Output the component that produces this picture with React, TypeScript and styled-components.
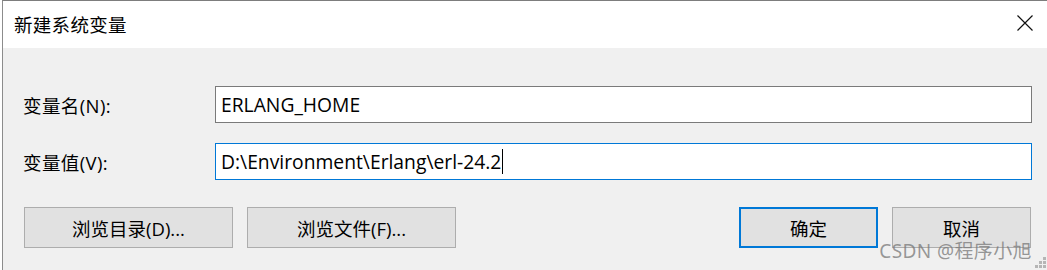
import React from "react";
import styled, { createGlobalStyle } from "styled-components";

const Global = createGlobalStyle`
  html, body { margin: 0; padding: 0; background: #ffffff; }
  body { width: 1047px; height: 270px; overflow: hidden; }
`;

const FONT = `"Segoe UI", "Open Sans", "Noto Sans CJK SC", sans-serif`;

const Window = styled.div`
  position: relative;
  margin-left: 2px;
  width: 1045px;
  height: 269px;
  border-top: 1px solid #7d7d7d;
  border-left: 1px solid #8c8c8c;
  background: #f0f0f0;
  font-family: ${FONT};
  color: #000;
  display: flex;
  flex-direction: column;
  overflow: hidden;
`;

const TitleBar = styled.div`
  height: 47px;
  background: #ffffff;
  display: flex;
  align-items: center;
  justify-content: space-between;
  padding: 0 15px 0 11px;
  flex-shrink: 0;
`;

const Title = styled.span`
  font-size: 18.5px;
  letter-spacing: 0.3px;
  margin-top: -2px;
`;

const CloseIcon = styled.svg`
  width: 16px;
  height: 16px;
  margin-top: -4px;
`;

const Body = styled.div`
  flex: 1;
  padding: 38px 16px 0 20px;
  display: flex;
  flex-direction: column;
`;

const Row = styled.div`
  display: grid;
  grid-template-columns: 192px 1fr;
  align-items: center;
  margin-bottom: 20px;
`;

const Label = styled.span`
  font-size: 18.5px;
  letter-spacing: 0.4px;
`;

const Field = styled.div<{ $focused?: boolean }>`
  height: 37px;
  box-sizing: border-box;
  background: #fff;
  border: 1px solid ${(p) => (p.$focused ? "#0078d7" : "#7a7a7a")};
  display: flex;
  align-items: center;
  padding-left: 5px;
  font-size: 19.3px;
  white-space: pre;
`;

const Caret = styled.span`
  display: inline-block;
  width: 1px;
  height: 25px;
  background: #000;
  margin-left: 1px;
`;

const ButtonBar = styled.div`
  display: flex;
  justify-content: space-between;
  margin-top: 7px;
  padding: 0 1px 0 1px;
`;

const Group = styled.div`
  display: flex;
  gap: 14px;
`;

const Button = styled.div<{ $w: number; $primary?: boolean }>`
  width: ${(p) => p.$w}px;
  height: 41px;
  box-sizing: border-box;
  background: #e1e1e1;
  border: ${(p) => (p.$primary ? "2px solid #0078d7" : "1px solid #adadad")};
  display: flex;
  align-items: center;
  justify-content: center;
  font-size: 18.5px;
`;

const Watermark = styled.div`
  position: absolute;
  right: 16px;
  bottom: 6px;
  font-family: "Noto Sans", "Noto Sans CJK SC", sans-serif;
  font-size: 19px;
  color: rgba(120, 120, 120, 0.75);
  letter-spacing: 0.4px;
`;

const Grip = styled.svg`
  position: absolute;
  right: 2px;
  bottom: 2px;
  width: 12px;
  height: 12px;
`;

export default function App() {
  return (
    <>
      <Global />
      <Window>
        <TitleBar>
          <Title>新建系统变量</Title>
          <CloseIcon viewBox="0 0 16 16">
            <path d="M0.5 0.5 L15.5 15.5 M15.5 0.5 L0.5 15.5" stroke="#111" strokeWidth="1.2" fill="none" />
          </CloseIcon>
        </TitleBar>
        <Body>
          <Row>
            <Label>变量名(N):</Label>
            <Field>ERLANG_HOME</Field>
          </Row>
          <Row>
            <Label>变量值(V):</Label>
            <Field $focused>
              D:\Environment\Erlang\erl-24.2
              <Caret />
            </Field>
          </Row>
          <ButtonBar>
            <Group>
              <Button $w={209}>浏览目录(D)...</Button>
              <Button $w={209}>浏览文件(F)...</Button>
            </Group>
            <Group>
              <Button $w={139} $primary>确定</Button>
              <Button $w={139}>取消</Button>
            </Group>
          </ButtonBar>
        </Body>
        <Watermark>CSDN @程序小旭</Watermark>
        <Grip viewBox="0 0 12 12">
          {[
            [9, 1],
            [5, 5], [9, 5],
            [1, 9], [5, 9], [9, 9],
          ].map(([x, y], i) => (
            <rect key={i} x={x} y={y} width="3" height="3" fill="#b5b5b5" />
          ))}
        </Grip>
      </Window>
    </>
  );
}
